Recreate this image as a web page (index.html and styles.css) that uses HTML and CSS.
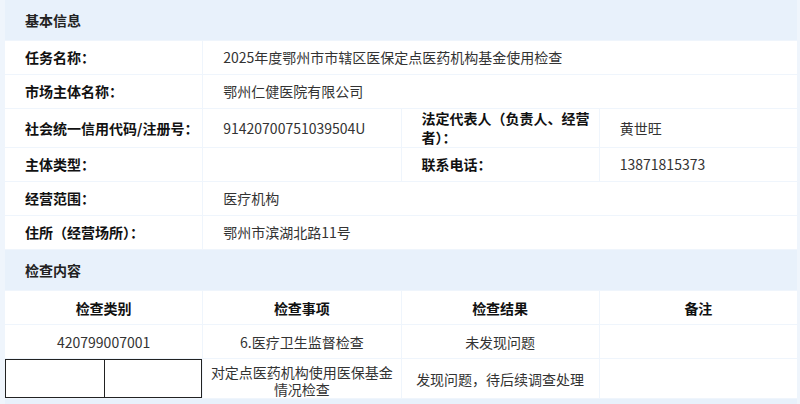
FILE: index.html
```html
<!DOCTYPE html>
<html lang="zh-CN">
<head>
    <meta charset="utf-8">
    <title>检查详情</title>
    <meta name="viewport" content="width=device-width, initial-scale=1">
    <link rel="stylesheet" href="styles.css">
</head>

<body>
    <div class="page">
        <section class="panel">
            <h2 class="panel-title">基本信息</h2>
            <div class="info-grid">
                <div class="label">任务名称：</div>
                <div class="value span-3">2025年度鄂州市市辖区医保定点医药机构基金使用检查</div>

                <div class="label">市场主体名称：</div>
                <div class="value span-3">鄂州仁健医院有限公司</div>

                <div class="label">社会统一信用代码/注册号：</div>
                <div class="value">91420700751039504U</div>
                <div class="label">法定代表人（负责人、经营者）：</div>
                <div class="value">黄世旺</div>

                <div class="label">主体类型：</div>
                <div class="value"></div>
                <div class="label">联系电话：</div>
                <div class="value">13871815373</div>

                <div class="label">经营范围：</div>
                <div class="value span-3">医疗机构</div>

                <div class="label">住所（经营场所）：</div>
                <div class="value span-3">鄂州市滨湖北路11号</div>
            </div>
        </section>

        <section class="panel">
            <h2 class="panel-title">检查内容</h2>
            <div class="check-grid">
                <div class="th">检查类别</div>
                <div class="th">检查事项</div>
                <div class="th">检查结果</div>
                <div class="th">备注</div>

                <div class="td">420799007001</div>
                <div class="td">6.医疗卫生监督检查</div>
                <div class="td">未发现问题</div>
                <div class="td"></div>

                <div class="td td-nested">
                    <div class="nested"><span></span><span></span></div>
                </div>
                <div class="td td-wrap">对定点医药机构使用医保基金情况检查</div>
                <div class="td">发现问题，待后续调查处理</div>
                <div class="td"></div>
            </div>
        </section>

        <section class="panel">
            <h2 class="panel-title"></h2>
        </section>
    </div>
</body>
</html>
```

FILE: styles.css
```css
/* Font */
body, h1, h2, h3 {font-family: "Noto Sans CJK SC", "Noto Sans", sans-serif}

body {margin: 0; background: #eff5fc; color: #333; font-size: 14px}

.page {display: grid; gap: 1px; padding: 0 3px 0 5px}

/* Panels */
.panel {display: grid; gap: 1px}
.panel-title {
    margin: 0;
    height: 40px;
    padding-left: 20px;
    display: flex;
    align-items: center;
    background: #e8f1fb;
    font-size: 14px;
    font-weight: bold;
    color: #222;
}

/* Basic info */
.info-grid {
    display: grid;
    grid-template-columns: repeat(4, 1fr);
    grid-auto-rows: minmax(33px, auto);
    gap: 1px;
}
.info-grid .label,
.info-grid .value {
    background: #fff;
    display: flex;
    align-items: center;
    padding: 0 8px 0 20px;
    line-height: 19px;
}
.info-grid .label {font-weight: bold; color: #111; padding-right: 0}
.span-3 {grid-column: span 3}

/* Check table */
.check-grid {
    display: grid;
    grid-template-columns: repeat(4, 1fr);
    grid-auto-rows: minmax(33px, auto);
    gap: 1px;
}
.th, .td {
    background: #fff;
    display: flex;
    align-items: center;
    justify-content: center;
    text-align: center;
    padding: 0 4px;
}
.th {font-weight: bold; color: #111}
.td-wrap {line-height: 17px; padding-top: 5px}
.td-nested {padding: 0; align-items: stretch}
.nested {
    flex: 1;
    display: grid;
    grid-template-columns: 1fr 1fr;
    border: 1px solid #222;
}
.nested span + span {border-left: 1px solid #222}
```
